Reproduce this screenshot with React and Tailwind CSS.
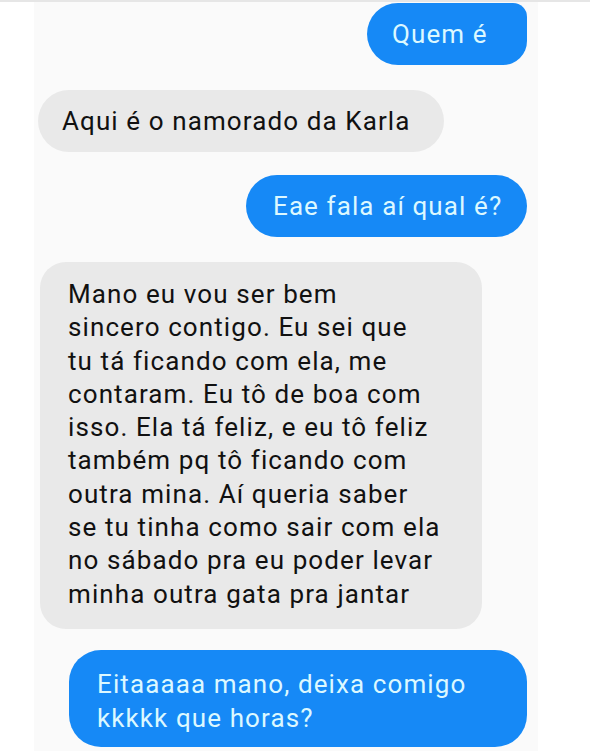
export default function App() {
  const longText = [
    'Mano eu vou ser bem',
    'sincero contigo. Eu sei que',
    'tu tá ficando com ela, me',
    'contaram. Eu tô de boa com',
    'isso. Ela tá feliz, e eu tô feliz',
    'também pq tô ficando com',
    'outra mina. Aí queria saber',
    'se tu tinha como sair com ela',
    'no sábado pra eu poder levar',
    'minha outra gata pra jantar',
  ];

  return (
    <div className="w-[600px] h-[751px] overflow-hidden bg-white" style={{ fontFamily: 'Roboto, "Noto Sans", sans-serif' }}>
      <div className="h-[2px] w-[590px] bg-[#e6e6e6]" />
      <div className="ml-[34px] w-[504px] h-[749px] bg-[#fafafa] flex flex-col pt-[1px] text-[26px] tracking-[1.1px]">
        {/* sent */}
        <div className="flex justify-end pr-[11px]">
          <div className="w-[160px] h-[62px] bg-[#1689f6] text-[#dcf8ff] rounded-l-[31px] rounded-tr-[14px] rounded-br-[24px] flex items-center pl-[25px]">
            Quem é
          </div>
        </div>

        {/* received */}
        <div className="mt-[25px] pl-[4px]">
          <div className="w-[406px] h-[62px] bg-[#e9e9e9] text-[#111] rounded-full flex items-center pl-[24px]">
            Aqui é o namorado da Karla
          </div>
        </div>

        <div className="mt-[23px] flex justify-end pr-[11px]">
          <div className="w-[281px] h-[62px] bg-[#1689f6] text-[#dcf8ff] rounded-full flex items-center pl-[27px]">
            Eae fala aí qual é?
          </div>
        </div>

        <div className="mt-[25px] pl-[6px]">
          <div className="w-[442px] h-[367px] bg-[#e9e9e9] text-[#111] rounded-[26px] pl-[28px] pt-[16px] leading-[33.3px]">
            {longText.map((line) => (
              <div key={line}>{line}</div>
            ))}
          </div>
        </div>

        <div className="mt-[21px] flex justify-end pr-[11px]">
          <div className="w-[458px] h-[97px] bg-[#1689f6] text-[#dcf8ff] rounded-[32px] pl-[28px] pt-[17px] leading-[34px]">
            <div>Eitaaaaa mano, deixa comigo</div>
            <div>kkkkk que horas?</div>
          </div>
        </div>
      </div>
    </div>
  );
}
